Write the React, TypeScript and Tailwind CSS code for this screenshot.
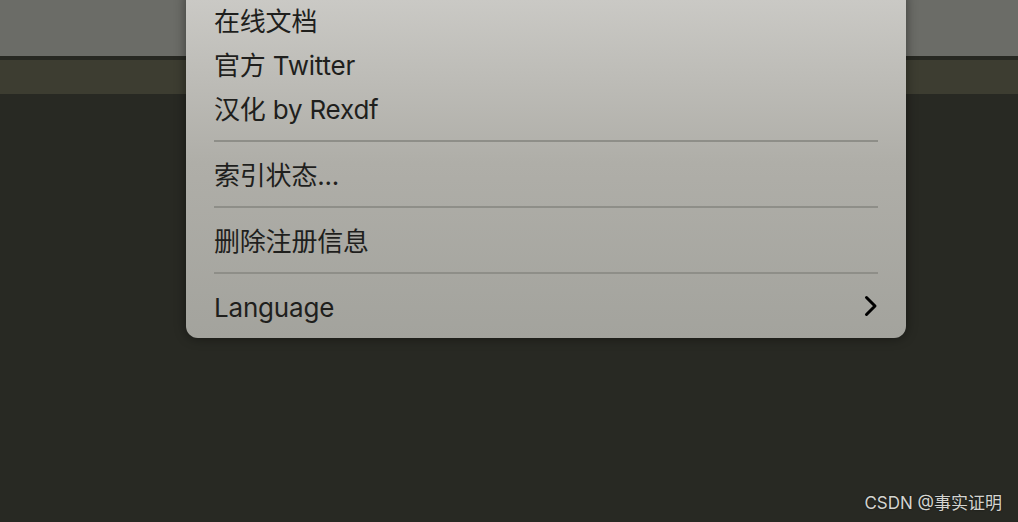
const font = {fontFamily: '"Inter", "Noto Sans CJK SC", sans-serif'};

function MenuRow(props: {label: string, arrow?: boolean}){
    return (
        <div className="flex h-[44px] items-center justify-between pl-[28px] pr-[28px] pt-[3px]">
            <span className="text-[26px] leading-none tracking-[-0.2px] text-[#1f1f1d]">{props.label}</span>
            {props.arrow && (
                <svg width="14" height="22" viewBox="0 0 14 22" fill="none" className="-mt-[3px]">
                    <path d="M2.5 2.5 L11 11 L2.5 19.5" stroke="black" strokeWidth="3" strokeLinecap="round" strokeLinejoin="round"/>
                </svg>
            )}
        </div>
    )
}

function Separator(){
    return (
        <div className="flex h-[22px] items-center px-[28px]">
            <div className="h-[2px] w-full bg-[#8e8e88]"></div>
        </div>
    )
}

export default function App(){
    return (
        <div className="relative h-[522px] w-[1018px] overflow-hidden bg-[#282923]" style={font}>
            <div className="h-[56px] bg-[#6b6c67]"></div>
            <div className="h-[4px] bg-[#272822]"></div>
            <div className="h-[34px] bg-[#3d3d31]"></div>

            <div
                className="absolute left-[186px] top-[-12px] w-[720px] rounded-[12px] bg-gradient-to-b from-[#cccbc7] via-[#afaea8] to-[#a3a39d] pt-[10px] pb-[10px] shadow-[0_0_12px_rgba(0,0,0,0.45)]">
                <MenuRow label="在线文档"/>
                <MenuRow label="官方 Twitter"/>
                <MenuRow label="汉化 by Rexdf"/>
                <Separator/>
                <MenuRow label="索引状态..."/>
                <Separator/>
                <MenuRow label="删除注册信息"/>
                <Separator/>
                <MenuRow label="Language" arrow/>
            </div>

            <div className="absolute bottom-[10px] right-[16px] text-[17px] leading-none text-[#d4d4d0] [text-shadow:0_0_2px_rgba(0,0,0,0.6)]">
                CSDN @事实证明
            </div>
        </div>
    )
}
